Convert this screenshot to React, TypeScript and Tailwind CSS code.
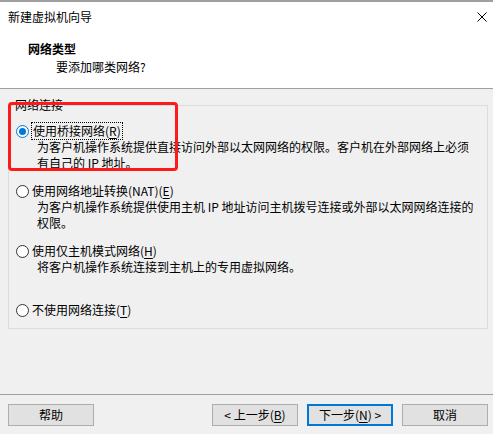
import React from "react";

function Radio({ selected }: { selected?: boolean }) {
  if (selected) {
    return (
      <span className="w-[13px] h-[13px] rounded-full border border-[#0078d7] bg-white flex items-center justify-center shrink-0">
        <span className="w-[7px] h-[7px] rounded-full bg-[#0078d7]" />
      </span>
    );
  }
  return <span className="w-[13px] h-[13px] rounded-full border border-[#333333] bg-white shrink-0" />;
}

function Option({
  selected,
  text,
  mn,
  desc,
  className,
}: {
  selected?: boolean;
  text: string;
  mn: string;
  desc: string[];
  className?: string;
}) {
  const label = (
    <>
      {text}(<u className="underline-offset-[2px]">{mn}</u>)
    </>
  );
  return (
    <div className={"flex flex-col " + (className || "")}>
      <div className="flex items-center h-[16px]">
        <Radio selected={selected} />
        {selected ? (
          <span className="ml-[2px] px-[1px] border border-dotted border-black leading-[16px] h-[18px] flex items-center">
            {label}
          </span>
        ) : (
          <span className="ml-[3px]">{label}</span>
        )}
      </div>
      {desc.map((d, i) => (
        <div key={i} className="pl-[21px] h-[16px] whitespace-nowrap">
          {d}
        </div>
      ))}
    </div>
  );
}

function Btn({ children, primary }: { children: React.ReactNode; primary?: boolean }) {
  return (
    <div
      className={
        "w-[86px] h-[22px] bg-[#e1e1e1] flex items-center justify-center " +
        (primary ? "border-2 border-[#0078d7]" : "border border-[#adadad]")
      }
    >
      {children}
    </div>
  );
}

export default function App() {
  return (
    <div className="relative w-[493px] h-[434px] bg-[#f0f0f0] flex flex-col text-[12px] leading-[16px] text-black overflow-hidden font-['Noto_Sans_CJK_SC',sans-serif]">
      <div className="h-[2px] bg-[#a0a0a0] shrink-0" />
      <div className="bg-white h-[87px] border-b border-[#a0a0a0] flex flex-col shrink-0">
        <div className="flex items-center justify-between h-[30px] pl-[8px] pr-[6px]">
          <span>新建虚拟机向导</span>
          <svg width="10" height="10" viewBox="0 0 10 10" className="shrink-0">
            <path d="M0.5 0.5 L9.5 9.5 M9.5 0.5 L0.5 9.5" stroke="#000" strokeWidth="1" fill="none" />
          </svg>
        </div>
        <div className="pl-[28px] pt-[8px] font-bold leading-[18px]">网络类型</div>
        <div className="pl-[56px] leading-[18px]">要添加哪类网络?</div>
      </div>

      <div className="pt-[8px] shrink-0">
        <fieldset className="ml-[8px] w-[480px] border border-[#dcdcdc]">
          <legend className="ml-[5px] px-[1px] leading-[16px]">网络连接</legend>
          <div className="pl-[7px] pt-[10px] pb-[10px] flex flex-col">
            <Option
              selected
              text="使用桥接网络"
              mn="R"
              desc={[
                "为客户机操作系统提供直接访问外部以太网网络的权限。客户机在外部网络上必须",
                "有自己的 IP 地址。",
              ]}
            />
            <Option
              className="mt-[12px]"
              text="使用网络地址转换(NAT)"
              mn="E"
              desc={["为客户机操作系统提供使用主机 IP 地址访问主机拨号连接或外部以太网网络连接的", "权限。"]}
            />
            <Option
              className="mt-[12px]"
              text="使用仅主机模式网络"
              mn="H"
              desc={["将客户机操作系统连接到主机上的专用虚拟网络。"]}
            />
            <Option className="mt-[27px]" text="不使用网络连接" mn="T" desc={[]} />
          </div>
        </fieldset>
      </div>

      <div className="flex-1" />

      <div className="border-t border-[#a0a0a0] pt-[9px] pb-[8px] pl-[8px] pr-[5px] flex items-center shrink-0">
        <Btn>帮助</Btn>
        <div className="flex-1" />
        <div className="flex gap-[9px]">
          <Btn>
            &lt; 上一步(<u className="underline-offset-[2px]">B</u>)
          </Btn>
          <Btn primary>
            下一步(<u className="underline-offset-[2px]">N</u>) &gt;
          </Btn>
          <Btn>取消</Btn>
        </div>
      </div>

      <div className="absolute left-[8px] top-[102px] w-[170px] h-[69px] border-[3px] border-[#ff1a1a] rounded-[4px] pointer-events-none" />
    </div>
  );
}
